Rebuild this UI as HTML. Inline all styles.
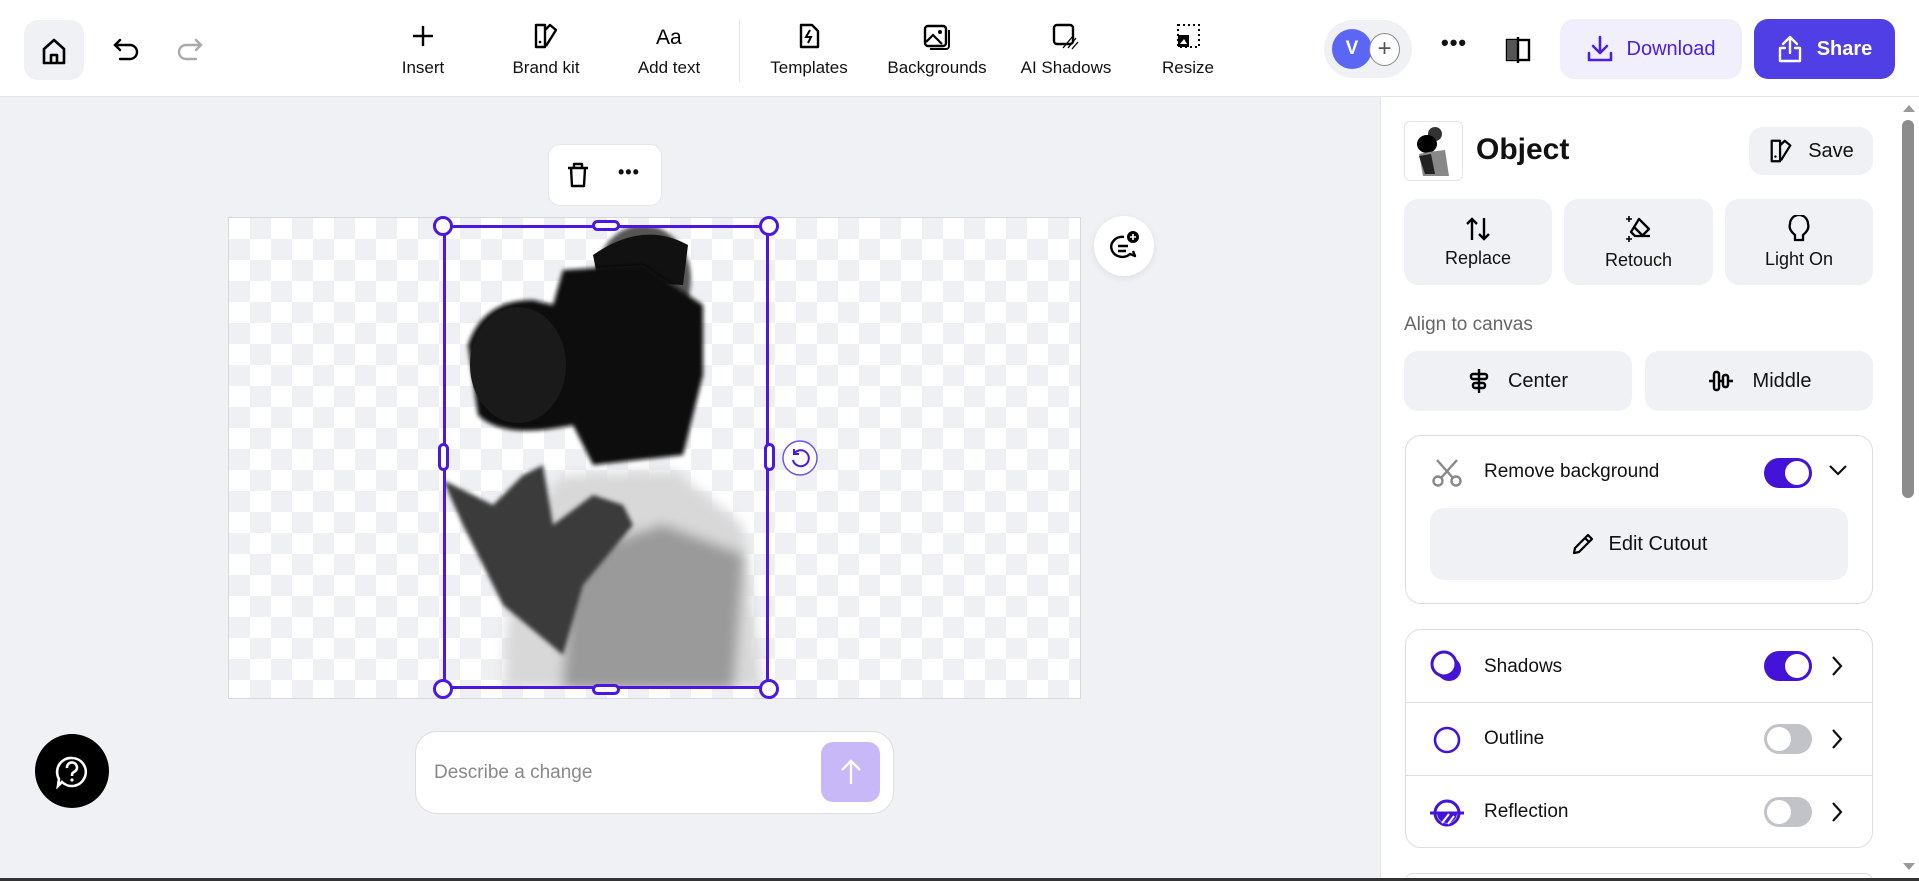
<!DOCTYPE html>
<html style="width:1919px;height:881px;overflow:hidden"><head><meta charset="utf-8"><style>
*{box-sizing:border-box;margin:0;padding:0}
body{width:1919px;height:881px;overflow:hidden;background:#f0f1f5;font-family:"Liberation Sans",sans-serif;color:#111;position:relative}
.abs{position:absolute}
.top{left:0;top:0;width:1919px;height:97px;background:#fff;border-bottom:1px solid #e4e5ea}
.tool{position:absolute;top:22px;width:110px;margin-left:-55px;text-align:center;font-size:17px}
.tool svg{display:block;margin:0 auto 8px;height:28px}
.side{left:1380px;top:97px;width:539px;height:784px;background:#fff;border-left:1px solid #e4e5ea}
.btn{position:absolute;background:#f0f1f5;border-radius:14px;display:flex;align-items:center;justify-content:center;font-size:18px}
.card{position:absolute;left:1405px;width:468px;border:1px solid #dcdde2;border-radius:16px;background:#fff}
.tog{position:absolute;width:48px;height:30px;border-radius:15px;left:1764px}
.tog i{position:absolute;top:3px;width:24px;height:24px;border-radius:50%;background:#fff}
.on{background:#4313d8}.on i{right:3px}
.off{background:#c2c3c8}.off i{left:3px}
.row{position:absolute;left:1484px;font-size:19px}
.chev{position:absolute;left:1828px}
</style></head><body>
<div class="abs top"></div>
<div class="abs" style="left:24px;top:20px;width:60px;height:60px;border-radius:14px;background:#f0f1f5"></div>
<svg class="abs" style="left:40px;top:36px" width="28" height="30" viewBox="0 0 28 30"><path d="M4 13 L14 4 L24 13 V27 H4Z M11 27 V19 H17 V27" fill="none" stroke="#000" stroke-width="2.6" stroke-linejoin="round"/></svg>
<svg class="abs" style="left:112px;top:36px" width="30" height="26" viewBox="0 0 30 26"><path d="M8 4 L3 9 L8 14 M3 9 H18 a7 7 0 0 1 0 14 H8" fill="none" stroke="#000" stroke-width="2.4" stroke-linecap="round"/></svg>
<svg class="abs" style="left:174px;top:36px" width="30" height="26" viewBox="0 0 30 26"><path d="M22 4 L27 9 L22 14 M27 9 H12 a7 7 0 0 0 0 14 H22" fill="none" stroke="#aaa" stroke-width="2.4" stroke-linecap="round"/></svg>

<div class="tool" style="left:423px"><svg width="28" viewBox="0 0 28 28"><path d="M14 4V24M4 14H24" stroke="#000" stroke-width="2.4"/></svg>Insert</div>
<div class="tool" style="left:546px"><svg width="28" viewBox="0 0 28 28"><path d="M4 3H13V25H4Z M13 8 L18 3 L24 8 L14 24" fill="none" stroke="#000" stroke-width="2.4" stroke-linejoin="round"/><circle cx="8" cy="20" r="1.3"/></svg>Brand kit</div>
<div class="tool" style="left:669px"><svg width="30" viewBox="0 0 30 28"><text x="2" y="22" font-size="21" font-family="Liberation Sans">Aa</text></svg>Add text</div>
<div class="abs" style="left:739px;top:20px;width:1px;height:62px;background:#e4e5ea"></div>
<div class="tool" style="left:809px"><svg width="28" viewBox="0 0 28 28"><path d="M6 3H17L23 9V25H6Z" fill="none" stroke="#000" stroke-width="2.4" stroke-linejoin="round"/><path d="M15 8L11 15H16L13 21" fill="none" stroke="#000" stroke-width="2"/></svg>Templates</div>
<div class="tool" style="left:937px"><svg width="30" viewBox="0 0 30 28"><rect x="3" y="4" width="21" height="20" rx="3" fill="none" stroke="#000" stroke-width="2.4"/><path d="M4 20L11 13L20 22" fill="none" stroke="#000" stroke-width="2.2"/><circle cx="18" cy="10" r="2"/><path d="M27 8V24a3 3 0 0 1-3 3H8" fill="none" stroke="#000" stroke-width="2"/></svg>Backgrounds</div>
<div class="tool" style="left:1066px"><svg width="30" viewBox="0 0 30 28"><rect x="3" y="3" width="19" height="19" rx="3" fill="none" stroke="#000" stroke-width="2.4"/><path d="M25 16L17 26M27 20L21 27M22 14L12 26" stroke="#000" stroke-width="1.3"/></svg>AI Shadows</div>
<div class="tool" style="left:1188px"><svg width="28" viewBox="0 0 28 28"><rect x="4" y="3" width="21" height="22" fill="none" stroke="#000" stroke-width="2" stroke-dasharray="2 3"/><rect x="4" y="13" width="11" height="12" fill="#000"/><path d="M6 22L10 17L13 22Z" fill="#fff"/></svg>Resize</div>

<div class="abs" style="left:1324px;top:20px;width:88px;height:58px;border-radius:29px;background:#f0f1f5"></div>
<div class="abs" style="left:1332px;top:29px;width:40px;height:40px;border-radius:50%;background:#5b67f4;color:#fff;font-size:19px;font-weight:bold;text-align:center;line-height:40px">V</div>
<div class="abs" style="left:1369px;top:33px;width:31px;height:33px;border-radius:50%;background:#fff;border:1px solid #888;text-align:center;line-height:30px;font-size:24px;color:#555">+</div>
<div class="abs" style="left:1441px;top:30px;font-size:22px;font-weight:bold;letter-spacing:1px">•••</div>
<svg class="abs" style="left:1505px;top:37px" width="26" height="26" viewBox="0 0 26 26"><rect x="2" y="3" width="22" height="20" fill="none" stroke="#000" stroke-width="2.4"/><rect x="2" y="3" width="11" height="20" fill="#555"/><path d="M13 0V26" stroke="#000" stroke-width="2.4"/></svg>
<div class="abs" style="left:1560px;top:19px;width:182px;height:60px;border-radius:14px;background:#f2effd;color:#4a1fe0;font-size:20px;display:flex;align-items:center;justify-content:center;gap:14px"><svg width="26" height="28" viewBox="0 0 26 28"><path d="M13 2V18M6 11L13 18L20 11M2 18V25H24V18" fill="none" stroke="#4a1fe0" stroke-width="2.6" stroke-linecap="round" stroke-linejoin="round"/></svg>Download</div>
<div class="abs" style="left:1754px;top:19px;width:141px;height:60px;border-radius:14px;background:#4f3fe4;color:#fff;font-size:20px;font-weight:bold;display:flex;align-items:center;justify-content:center;gap:14px"><svg width="26" height="28" viewBox="0 0 26 28"><path d="M13 18V2M6 9L13 2L20 9M8 13H3V26H23V13H18" fill="none" stroke="#fff" stroke-width="2.4" stroke-linecap="round" stroke-linejoin="round"/></svg>Share</div>

<div class="abs" style="left:228px;top:217px;width:853px;height:482px;border:1px solid #d8d9de;background-color:#fff;background-image:linear-gradient(45deg,#eff0f4 25%,transparent 25%,transparent 75%,#eff0f4 75%),linear-gradient(45deg,#eff0f4 25%,transparent 25%,transparent 75%,#eff0f4 75%);background-size:42px 42px;background-position:0 0,21px 21px"></div>
<svg class="abs" style="left:443px;top:225px" width="326" height="464" viewBox="0 0 326 464">
<defs><filter id="b"><feGaussianBlur stdDeviation="6"/></filter><filter id="b2"><feGaussianBlur stdDeviation="2"/></filter></defs>
<path d="M60 464 L70 300 L120 250 L230 245 L300 300 L320 464Z" fill="#d8d8d8" filter="url(#b)"/>
<path d="M120 464 L130 330 L220 300 L300 330 L290 464Z" fill="#9a9a9a" filter="url(#b)"/>
<path d="M0 255 L50 280 L80 250 L100 240 L110 300 L150 270 L180 280 L190 300 L140 360 L120 430 L60 380 L20 300Z" fill="#3a3a3a" filter="url(#b2)"/>
<ellipse cx="200" cy="55" rx="48" ry="55" fill="#555" filter="url(#b2)"/>
<path d="M150 30 Q200 -5 245 20 L240 60 L155 55Z" fill="#111"/>
<path d="M25 120 Q40 75 90 75 L110 80 L120 45 L200 40 L260 80 L260 150 L240 230 L150 240 L130 200 Q60 215 35 190Z" fill="#0c0c0c" filter="url(#b2)"/>
<ellipse cx="75" cy="140" rx="48" ry="58" fill="#1a1a1a"/>
</svg>
<div class="abs" style="left:443px;top:225px;width:326px;height:464px;border:3px solid #4a17e3"></div>
<div class="abs" style="left:433px;top:216px;width:20px;height:20px;border-radius:50%;background:#fff;border:3px solid #4a17e3"></div>
<div class="abs" style="left:759px;top:216px;width:20px;height:20px;border-radius:50%;background:#fff;border:3px solid #4a17e3"></div>
<div class="abs" style="left:433px;top:679px;width:20px;height:20px;border-radius:50%;background:#fff;border:3px solid #4a17e3"></div>
<div class="abs" style="left:759px;top:679px;width:20px;height:20px;border-radius:50%;background:#fff;border:3px solid #4a17e3"></div>
<div class="abs" style="left:592px;top:220px;width:28px;height:11px;border-radius:6px;background:#fff;border:3px solid #4a17e3"></div>
<div class="abs" style="left:592px;top:684px;width:28px;height:11px;border-radius:6px;background:#fff;border:3px solid #4a17e3"></div>
<div class="abs" style="left:438px;top:443px;width:11px;height:28px;border-radius:6px;background:#fff;border:3px solid #4a17e3"></div>
<div class="abs" style="left:764px;top:443px;width:11px;height:28px;border-radius:6px;background:#fff;border:3px solid #4a17e3"></div>
<svg class="abs" style="left:782px;top:440px" width="36" height="36" viewBox="0 0 36 36"><circle cx="18" cy="18" r="17" fill="#fff" stroke="#6a4cf0" stroke-width="1.4"/><path d="M12 14a8 8 0 1 1-1 6M12 9V14H17" fill="none" stroke="#4a17e3" stroke-width="2"/></svg>

<div class="abs" style="left:548px;top:144px;width:114px;height:62px;background:#fff;border-radius:12px;border:1px solid #e6e7eb"></div>
<svg class="abs" style="left:566px;top:162px" width="24" height="26" viewBox="0 0 24 26"><path d="M2 6H22M8 6V2H16V6M5 6L6 24H18L19 6" fill="none" stroke="#000" stroke-width="2.4" stroke-linejoin="round"/></svg>
<div class="abs" style="left:618px;top:162px;font-size:18px;font-weight:bold;letter-spacing:1px">•••</div>
<div class="abs" style="left:1094px;top:216px;width:60px;height:60px;border-radius:50%;background:#fff;box-shadow:0 2px 8px rgba(0,0,0,.08)"></div>
<svg class="abs" style="left:1109px;top:230px" width="32" height="32" viewBox="0 0 32 32"><path d="M17 7a11 10 0 1 0 6 17l5 2-2-5" fill="none" stroke="#000" stroke-width="2.4" stroke-linejoin="round" transform="translate(-2 0)"/><path d="M9 16H19M9 21H17" stroke="#000" stroke-width="2.4"/><circle cx="24" cy="7" r="6" fill="#000"/><path d="M24 4V10M21 7H27" stroke="#fff" stroke-width="1.6"/></svg>

<div class="abs" style="left:415px;top:731px;width:479px;height:83px;border-radius:22px;background:#fff;border:1px solid #dcdde2"></div>
<div class="abs" style="left:434px;top:762px;font-size:19px;color:#888">Describe a change</div>
<div class="abs" style="left:821px;top:742px;width:59px;height:60px;border-radius:12px;background:#c9b8f7"></div>
<svg class="abs" style="left:838px;top:758px" width="26" height="28" viewBox="0 0 26 28"><path d="M13 26V3M4 12L13 3L22 12" fill="none" stroke="#fff" stroke-width="2.4"/></svg>
<div class="abs" style="left:35px;top:734px;width:74px;height:74px;border-radius:50%;background:#000"></div>
<svg class="abs" style="left:55px;top:755px" width="34" height="34" viewBox="0 0 34 34"><path d="M17 3a14 14 0 1 1-10 24l-4 4 1-7A14 14 0 0 1 17 3Z" fill="none" stroke="#fff" stroke-width="2.6"/><path d="M12 13a5 5 0 1 1 7 4c-2 1-2 2-2 4" fill="none" stroke="#fff" stroke-width="2.6"/><circle cx="17" cy="25" r="1.6" fill="#fff"/></svg>

<div class="abs side"></div>
<div class="abs" style="left:1902px;top:120px;width:12px;height:378px;border-radius:6px;background:#8c8c8c"></div>
<svg class="abs" style="left:1902px;top:103px" width="14" height="10"><path d="M1 9L7 2L13 9Z" fill="#999"/></svg>
<svg class="abs" style="left:1902px;top:862px" width="14" height="10"><path d="M1 1L7 8L13 1Z" fill="#999"/></svg>
<div class="abs" style="left:1404px;top:121px;width:59px;height:60px;border:1px solid #e3e4e8;border-radius:6px;background:#fff;overflow:hidden"><svg width="59" height="60"><ellipse cx="30" cy="12" rx="7" ry="7" fill="#333"/><ellipse cx="22" cy="22" rx="10" ry="9" fill="#000"/><path d="M14 32L24 30L40 28L44 54L18 54Z" fill="#888"/><path d="M14 34L26 32L30 52H20Z" fill="#222"/></svg></div>
<div class="abs" style="left:1476px;top:133px;font-size:30px;font-weight:bold">Object</div>
<div class="btn" style="left:1749px;top:127px;width:124px;height:48px;gap:14px;font-size:20px"><svg width="26" height="28" viewBox="0 0 28 28"><path d="M4 3H13V25H4Z M13 8 L18 3 L24 8 L14 24" fill="none" stroke="#000" stroke-width="2.4" stroke-linejoin="round"/><circle cx="8" cy="20" r="1.3"/></svg>Save</div>
<div class="btn" style="left:1404px;top:199px;width:148px;height:86px;flex-direction:column;gap:6px"><svg width="28" height="26" viewBox="0 0 28 26"><path d="M8 24V3M3 8L8 3L13 8M20 2V23M15 18L20 23L25 18" fill="none" stroke="#000" stroke-width="2.4"/></svg>Replace</div>
<div class="btn" style="left:1564px;top:199px;width:149px;height:86px;flex-direction:column;gap:6px"><svg width="30" height="30" viewBox="0 0 30 30"><path d="M15 5L25 15L18 22H11L7 18Z M11 22H26M10 13L18 21" fill="none" stroke="#000" stroke-width="2.3" stroke-linejoin="round"/><path d="M5 2V8M2 5H8M5 22V28M2 25H8" stroke="#000" stroke-width="1.6"/></svg>Retouch</div>
<div class="btn" style="left:1725px;top:199px;width:148px;height:86px;flex-direction:column;gap:6px"><svg width="24" height="28" viewBox="0 0 24 28"><path d="M8 25V20C3 16 2 12 3 9a9 9 0 0 1 18 0c1 3 0 7-5 11V25Z" fill="none" stroke="#000" stroke-width="2.3"/></svg>Light On</div>
<div class="abs" style="left:1404px;top:314px;font-size:19px;color:#666">Align to canvas</div>
<div class="btn" style="left:1404px;top:351px;width:228px;height:60px;gap:18px;font-size:20px"><svg width="22" height="28" viewBox="0 0 22 28"><path d="M11 2V26" stroke="#000" stroke-width="2.4"/><rect x="3" y="7" width="16" height="5" rx="2" fill="none" stroke="#000" stroke-width="2.4"/><rect x="5" y="16" width="12" height="5" rx="2" fill="none" stroke="#000" stroke-width="2.4"/></svg>Center</div>
<div class="btn" style="left:1645px;top:351px;width:228px;height:60px;gap:18px;font-size:20px"><svg width="28" height="22" viewBox="0 0 28 22"><path d="M2 11H26" stroke="#000" stroke-width="2.4"/><rect x="7" y="2" width="5" height="18" rx="2" fill="#f0f1f5" stroke="#000" stroke-width="2.4"/><rect x="16" y="5" width="5" height="12" rx="2" fill="#f0f1f5" stroke="#000" stroke-width="2.4"/></svg>Middle</div>

<div class="card" style="top:435px;height:169px"></div>
<svg class="abs" style="left:1431px;top:458px" width="32" height="30" viewBox="0 0 32 30"><path d="M6 2L22 20M26 2L10 20" stroke="#888" stroke-width="2.4"/><circle cx="7" cy="23" r="4.5" fill="none" stroke="#888" stroke-width="2.4"/><circle cx="25" cy="23" r="4.5" fill="none" stroke="#888" stroke-width="2.4"/></svg>
<div class="row" style="top:461px">Remove background</div>
<div class="tog on" style="top:458px"><i></i></div>
<svg class="abs chev" style="top:463px" width="20" height="14"><path d="M2 3L10 11L18 3" fill="none" stroke="#111" stroke-width="2.2"/></svg>
<div class="btn" style="left:1430px;top:508px;width:418px;height:72px;font-size:20px;gap:14px"><svg width="24" height="24" viewBox="0 0 24 24"><path d="M3 21L4 16L17 3L21 7L8 20Z M14 6L18 10" fill="none" stroke="#000" stroke-width="2.2" stroke-linejoin="round"/></svg>Edit Cutout</div>

<div class="card" style="top:629px;height:219px"></div>
<div class="abs" style="left:1405px;top:702px;width:468px;height:1px;background:#dcdde2"></div>
<div class="abs" style="left:1405px;top:775px;width:468px;height:1px;background:#dcdde2"></div>
<svg class="abs" style="left:1429px;top:649px" width="36" height="36" viewBox="0 0 36 36"><circle cx="20" cy="20" r="12" fill="#4313d8"/><circle cx="15" cy="15" r="12" fill="#fff" stroke="#4313d8" stroke-width="3"/></svg>
<div class="row" style="top:656px">Shadows</div>
<div class="tog on" style="top:651px"><i></i></div>
<svg class="abs chev" style="left:1830px;top:655px" width="14" height="22"><path d="M3 2L11 11L3 20" fill="none" stroke="#111" stroke-width="2.2"/></svg>
<svg class="abs" style="left:1432px;top:725px" width="30" height="30" viewBox="0 0 30 30"><circle cx="15" cy="15" r="12" fill="none" stroke="#4313d8" stroke-width="2.6"/></svg>
<div class="row" style="top:728px">Outline</div>
<div class="tog off" style="top:724px"><i></i></div>
<svg class="abs chev" style="left:1830px;top:728px" width="14" height="22"><path d="M3 2L11 11L3 20" fill="none" stroke="#111" stroke-width="2.2"/></svg>
<svg class="abs" style="left:1429px;top:797px" width="36" height="32" viewBox="0 0 36 32"><circle cx="18" cy="16" r="12" fill="none" stroke="#4313d8" stroke-width="3"/><path d="M1 16H35" stroke="#4313d8" stroke-width="3"/><path d="M8 16A10 10 0 0 0 28 16Z" fill="#4313d8"/><path d="M13 26L20 17M19 27L25 19" stroke="#fff" stroke-width="2"/></svg>
<div class="row" style="top:801px">Reflection</div>
<div class="tog off" style="top:797px"><i></i></div>
<svg class="abs chev" style="left:1830px;top:801px" width="14" height="22"><path d="M3 2L11 11L3 20" fill="none" stroke="#111" stroke-width="2.2"/></svg>
<div class="abs" style="left:1405px;top:873px;width:468px;height:8px;border:1px solid #dcdde2;border-bottom:none;border-radius:16px 16px 0 0;background:#fff"></div>
<div class="abs" style="left:0;top:878px;width:1919px;height:3px;background:#333"></div>
</body></html>
